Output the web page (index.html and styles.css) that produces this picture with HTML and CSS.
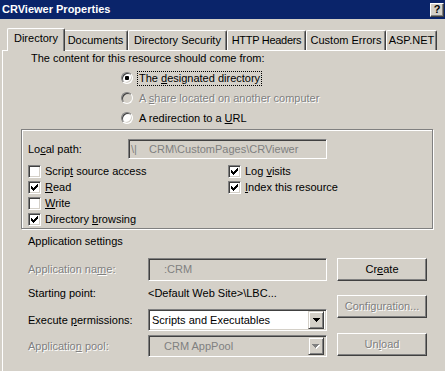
FILE: index.html
```html
<!DOCTYPE html>
<html lang="en">
<head>
  <meta charset="utf-8" />
  <title>CRViewer Properties</title>
  <link rel="stylesheet" href="styles.css">
</head>
<body>
  <div class="titlebar">
    <span class="title">CRViewer Properties</span>
    <span class="help">?</span>
  </div>

  <div class="tabs">
    <div class="tab active t-dir">Directory</div>
    <div class="tab t-docs">Documents</div>
    <div class="tab t-sec">Directory Security</div>
    <div class="tab t-http">HTTP Headers</div>
    <div class="tab t-err">Custom Errors</div>
    <div class="tab t-asp">ASP.NET</div>
  </div>

  <div class="page">
    <p class="intro">The content for this resource should come from:</p>

    <div class="radios">
      <div class="opt"><span class="radio on"></span><span class="focus">The <u>d</u>esignated directory</span></div>
      <div class="opt off"><span class="radio"></span><span class="txt">A <u>s</u>hare located on another computer</span></div>
      <div class="opt"><span class="radio"></span><span class="txt">A redirection to a <u>U</u>RL</span></div>
    </div>

    <div class="group">
      <div class="pathrow">
        <span class="lbl">Lo<u>c</u>al path:</span>
        <div class="edit off path"><span class="srv">\|</span><span>CRM\CustomPages\CRViewer</span></div>
      </div>
      <div class="checks">
        <div class="col">
          <div class="chk"><span class="box"></span><span>Scrip<u>t</u> source access</span></div>
          <div class="chk"><span class="box"><svg viewBox="1 1 11 11" width="11" height="11"><path d="M3 5h1v3H3zM4 6h1v3H4zM5 7h1v3H5zM6 6h1v3H6zM7 5h1v3H7zM8 4h1v3H8zM9 3h1v3H9z"/></svg></span><span><u>R</u>ead</span></div>
          <div class="chk"><span class="box"></span><span><u>W</u>rite</span></div>
          <div class="chk"><span class="box"><svg viewBox="1 1 11 11" width="11" height="11"><path d="M3 5h1v3H3zM4 6h1v3H4zM5 7h1v3H5zM6 6h1v3H6zM7 5h1v3H7zM8 4h1v3H8zM9 3h1v3H9z"/></svg></span><span>Directory <u>b</u>rowsing</span></div>
        </div>
        <div class="col">
          <div class="chk"><span class="box"><svg viewBox="1 1 11 11" width="11" height="11"><path d="M3 5h1v3H3zM4 6h1v3H4zM5 7h1v3H5zM6 6h1v3H6zM7 5h1v3H7zM8 4h1v3H8zM9 3h1v3H9z"/></svg></span><span>Log <u>v</u>isits</span></div>
          <div class="chk"><span class="box"><svg viewBox="1 1 11 11" width="11" height="11"><path d="M3 5h1v3H3zM4 6h1v3H4zM5 7h1v3H5zM6 6h1v3H6zM7 5h1v3H7zM8 4h1v3H8zM9 3h1v3H9z"/></svg></span><span><u>I</u>ndex this resource</span></div>
        </div>
      </div>
    </div>

    <p class="appset">Application settings</p>

    <div class="appgrid">
      <div class="rows">
        <div class="row r1">
          <span class="lbl dim">Application na<u>m</u>e:</span>
          <div class="edit off name">:CRM</div>
        </div>
        <div class="row r2">
          <span class="lbl">Starting point:</span>
          <span>&lt;Default Web Site&gt;\LBC...</span>
        </div>
        <div class="row r3">
          <span class="lbl">Execute <u>p</u>ermissions:</span>
          <div class="combo">
            <span class="val">Scripts and Executables</span>
            <span class="drop"><svg viewBox="0 0 7 4" width="7" height="4"><path d="M0 0h7v1H6v1H5v1H4v1H3V3H2V2H1V1H0z"/></svg></span>
          </div>
        </div>
        <div class="row r4">
          <span class="lbl dim">Applicatio<u>n</u> pool:</span>
          <div class="combo off">
            <span class="val">CRM AppPool</span>
            <span class="drop"><svg viewBox="0 0 8 5" width="8" height="5"><path fill="#fff" d="M1 1h7v1H7v1H6v1H5v1H4V4H3V3H2V2H1z"/><path fill="#808080" d="M0 0h7v1H6v1H5v1H4v1H3V3H2V2H1V1H0z"/></svg></span>
          </div>
        </div>
      </div>
      <div class="btns">
        <div class="btn">Cr<u>e</u>ate</div>
        <div class="btn dim cfg">Configuration...</div>
        <div class="btn dim unl">Un<u>l</u>oad</div>
      </div>
    </div>
  </div>
</body>
</html>
```

FILE: styles.css
```css
:root{
  --face:#D4D0C8; --shadow:#808080; --dark:#404040; --title:#0A246A;
}
*{box-sizing:border-box;margin:0;padding:0}
body{width:445px;height:371px;overflow:hidden;background:var(--face);color:#000;
  font-family:'Liberation Sans',Arial,sans-serif;font-size:11px;line-height:13px}
u{text-underline-offset:1px}

/* title bar */
.titlebar{height:19px;background:var(--title);display:flex;align-items:center;padding-left:2px}
.title{color:#fff;font-weight:700;font-size:11px}
.help{margin-left:auto;margin-right:1px;width:14px;height:14px;background:var(--face);
  border:1px solid;border-color:#fff var(--dark) var(--dark) #fff;box-shadow:inset -1px -1px 0 var(--shadow);
  font-weight:700;font-size:11px;line-height:11px;text-align:center}

/* tabs */
.tabs{display:flex;align-items:flex-end;height:22px;margin-top:9px;padding-left:9px}
.tab{height:20px;line-height:18px;text-align:center;white-space:nowrap;background:var(--face);
  border-top:1px solid #fff;border-left:1px solid #fff;border-right:1px solid var(--dark);
  border-radius:2px 2px 0 0;box-shadow:inset -1px 0 0 var(--shadow)}
.tab.active{height:23px;margin:0 -2px -1px;padding-bottom:2px;line-height:19px;position:relative;z-index:1}
.t-dir{width:58px}
.t-docs{width:65px}
.t-sec{width:99px}
.t-http{width:79px;letter-spacing:-.3px}
.t-err{width:80px}
.t-asp{width:51px}

/* page */
.page{margin-left:2px;border-left:1px solid #fff;border-top:1px solid #fff;height:321px}
.intro{margin:1px 0 0 28px}
.radios{margin:3px 0 0 118px}
.opt{height:20px;display:flex;align-items:center;gap:4px}
.radio{width:12px;height:12px;border-radius:50%;background:#fff;border:1px solid;
  border-color:var(--shadow) #fff #fff var(--shadow);
  box-shadow:inset 1px 1px 0 var(--dark),inset -1px -1px 0 var(--face);
  display:flex;align-items:center;justify-content:center}
.radio.on::after{content:'';width:4px;height:4px;border-radius:1px;background:#000}
.focus{border:1px dotted #000;padding:0 1px;line-height:13px}
.txt{padding-left:2px}
.opt.off .radio{background:var(--face)}
.opt.off .txt{color:var(--shadow);text-shadow:1px 1px 0 #fff}

/* group box */
.group{margin:1px 0 0 18px;width:412px;height:100px;border:1px solid var(--shadow);
  box-shadow:1px 1px 0 #fff,inset 1px 1px 0 #fff}
.pathrow{display:flex;align-items:center;height:20px;margin-top:9px;padding-left:6px}
.pathrow .lbl{width:100px}
.edit{height:20px;border:1px solid;border-color:var(--shadow) #fff #fff var(--shadow);
  box-shadow:inset 1px 1px 0 var(--dark),inset -1px -1px 0 var(--face);
  background:#fff;display:flex;align-items:center;white-space:nowrap;overflow:hidden}
.edit.off{background:var(--face);color:var(--shadow)}
.path{width:199px;padding-left:2px}
.srv{width:18px}
.checks{display:flex;margin-top:4px;padding-left:6px}
.col{width:200px}
.chk{height:16px;display:flex;align-items:center;gap:4px}
.box{width:13px;height:13px;background:#fff;border:1px solid;
  border-color:var(--shadow) #fff #fff var(--shadow);
  box-shadow:inset 1px 1px 0 var(--dark),inset -1px -1px 0 var(--face);
  display:flex;align-items:center;justify-content:center}
.box svg{display:block;shape-rendering:crispEdges}

/* application settings */
.appset{margin:6px 0 0 25px}
.appgrid{display:flex;margin:10px 0 0 25px}
.rows{width:299px}
.row{display:flex;align-items:center}
.row .lbl{width:120px;flex:none}
.r1{height:23px}
.r2{height:28px;align-items:flex-start;padding-top:6px}
.r3{height:22px}
.r4{height:22px;margin-top:4px}
.dim{color:var(--shadow);text-shadow:1px 1px 0 #fff}
.name{width:179px;height:23px;padding-left:15px}
.combo{width:179px;height:22px;display:flex;align-items:center;background:#fff;border:1px solid;
  border-color:var(--shadow) #fff #fff var(--shadow);
  box-shadow:inset 1px 1px 0 var(--dark),inset -1px -1px 0 var(--face);padding:2px}
.combo .val{flex:1;padding-left:1px;white-space:nowrap}
.combo.off{background:var(--face);color:var(--shadow)}
.combo.off .val{padding-left:13px}
.drop{width:16px;height:18px;background:var(--face);border:1px solid;
  border-color:var(--face) var(--dark) var(--dark) var(--face);
  box-shadow:inset 1px 1px 0 #fff,inset -1px -1px 0 var(--shadow);
  display:flex;align-items:center;justify-content:center}
.drop svg{display:block;shape-rendering:crispEdges}

.btns{margin-left:10px;width:90px}
.btn{height:23px;background:var(--face);border:1px solid;border-color:#fff var(--dark) var(--dark) #fff;
  box-shadow:inset -1px -1px 0 var(--shadow);display:flex;align-items:center;justify-content:center}
.cfg{margin-top:14px}
.unl{margin-top:15px}
```
